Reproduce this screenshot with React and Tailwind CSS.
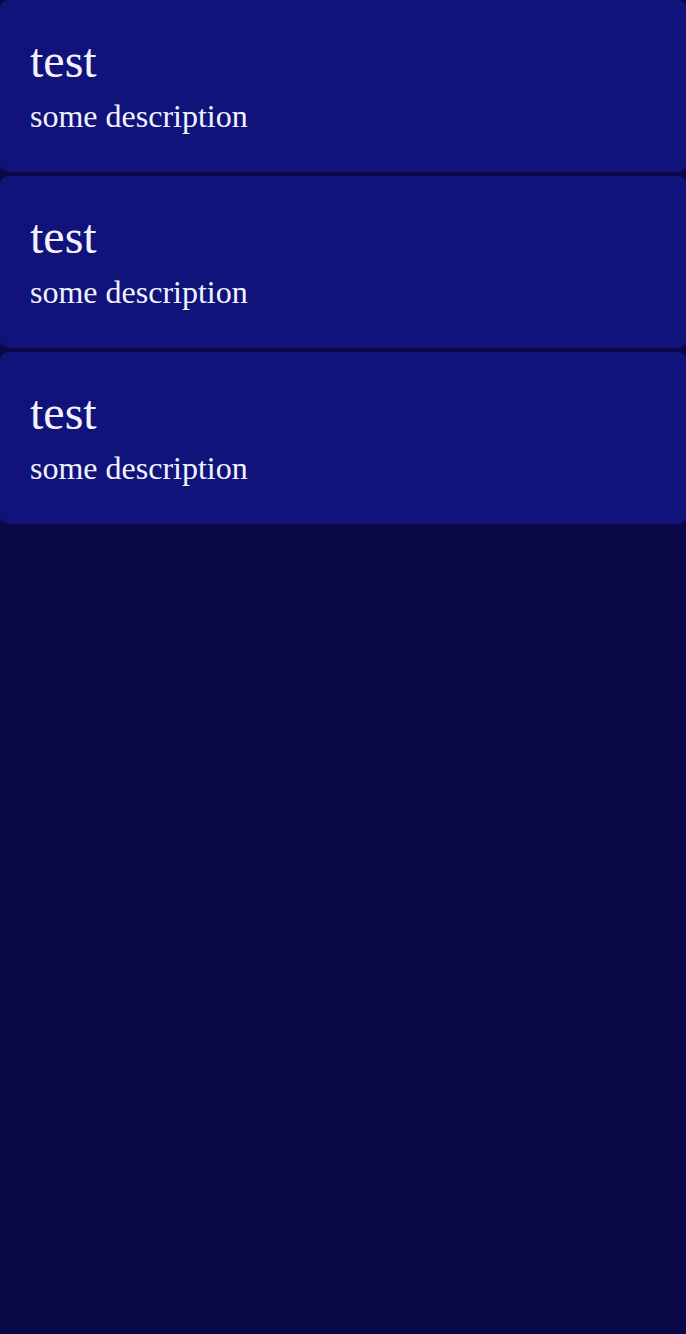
export default function App() {
  const items = [0, 1, 2];
  return (
    <div className="min-h-[1334px] bg-[#0a0847] flex flex-col gap-[4px]" style={{ fontFamily: '"Liberation Serif", serif' }}>
      {items.map((i) => (
        <div key={i} className="h-[172px] rounded-[8px] bg-[#10137a] px-[30px] pt-[33px] flex flex-col gap-[10px] text-[#f2f2ff]">
          <div className="text-[48px] leading-[55px]">test</div>
          <div className="text-[32px] leading-[37px]">some description</div>
        </div>
      ))}
    </div>
  );
}
